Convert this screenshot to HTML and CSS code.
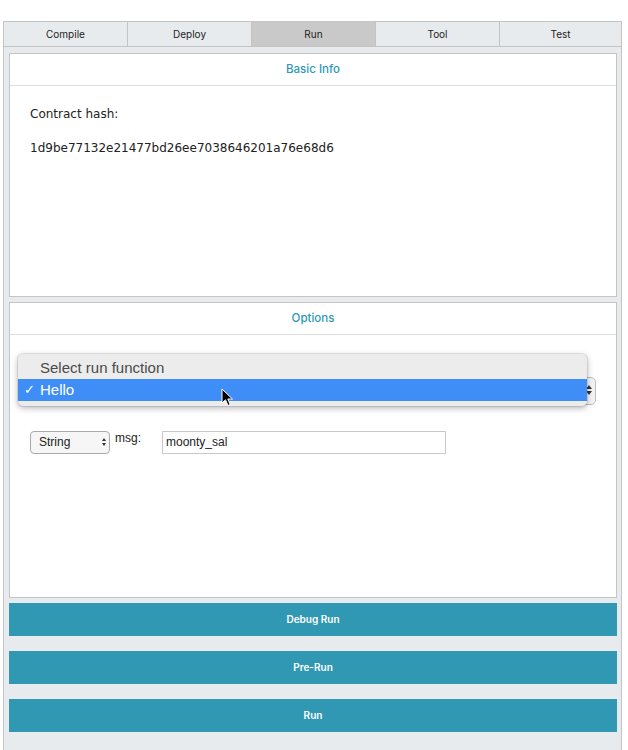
FILE: index.html
```html
<!DOCTYPE html>
<html>
<head>
<meta charset="utf-8">
<link rel="stylesheet" href="styles.css">
</head>
<body>
<div class="app">
  <div class="tabs">
    <div class="tab">Compile</div>
    <div class="tab">Deploy</div>
    <div class="tab active">Run</div>
    <div class="tab">Tool</div>
    <div class="tab">Test</div>
  </div>
  <div class="content">
    <section class="panel info">
      <div class="panel-head">Basic Info</div>
      <div class="panel-body">
        <p class="label">Contract hash:</p>
        <p class="hash">1d9be77132e21477bd26ee7038646201a76e68d6</p>
      </div>
    </section>
    <section class="panel options">
      <div class="panel-head">Options</div>
      <div class="panel-body opts">
        <div class="func-row">
          <div class="func-select"><span class="arrows"><i class="up"></i><i class="down"></i></span></div>
          <div class="menu">
            <div class="menu-item">Select run function</div>
            <div class="menu-item sel"><span class="check">✓</span>Hello</div>
          </div>
          <svg class="cursor" width="14" height="20" viewBox="0 0 14 20"><path d="M1 1 L1 15 L4.5 11.8 L7 17.5 L9.2 16.5 L6.8 11 L11.5 11 Z" fill="#000" stroke="#fff" stroke-width="1"/></svg>
        </div>
        <div class="param">
          <div class="type-select">String<span class="arrows small"><i class="up"></i><i class="down"></i></span></div>
          <span class="msg">msg:</span>
          <div class="input">moonty_sal</div>
        </div>
      </div>
    </section>
    <div class="btn">Debug Run</div>
    <div class="btn">Pre-Run</div>
    <div class="btn">Run</div>
  </div>
</div>
</body>
</html>
```
FILE: styles.css
```css
html, body { margin: 0; padding: 0; background: #fff; }
body { font-family: "Liberation Sans", Arial, sans-serif; }
.app {
  margin: 21px 0 0 3px;
  width: 617px;
  height: 740px;
  border: 1px solid #c4c4c4;
  border-bottom: none;
  background: #e8ebee;
}
.tabs { display: flex; height: 24px; border-bottom: 1px solid #c4c4c4; }
.tab {
  flex: 0 0 123px;
  border-left: 1px solid #c4c4c4;
  display: flex; align-items: center; justify-content: center;
  font-family: "Inter", "Liberation Sans", sans-serif;
  font-size: 10px; color: #222;
}
.tab:first-child { border-left: none; }
.tab:last-child { flex: 1; }
.tab.active { background: #c9c9c9; }
.content { padding: 6px 4px 0 5px; display: flex; flex-direction: column; }
.panel { background: #fff; border: 1px solid #c4c4c4; }
.panel-head {
  height: 30px; border-bottom: 1px solid #dedede;
  display: flex; align-items: center; justify-content: center;
  font-family: "Inter", "Liberation Sans", sans-serif;
  font-size: 11.5px; font-weight: 500; color: #2e97b5;
  padding-bottom: 1px;
}
.info { height: 242px; }
.info .panel-body { padding: 20px 20px; font-family: "DejaVu Sans", sans-serif; font-size: 12px; color: #222; }
.info p { margin: 0; }
.info .label { margin-top: 1px; }
.info .hash { margin-top: 20px; }
.options { height: 294px; margin-top: 5px; }
.opts { position: relative; padding: 0; }
.func-row { position: relative; height: 96px; }
.func-select {
  position: absolute; left: 8px; top: 42px; width: 576px; height: 26px;
  border: 1px solid #bdbdbd; border-radius: 5px; background: #f4f4f4;
}
.arrows { position: absolute; right: 3px; top: 7px; display: flex; flex-direction: column; gap: 2px; }
.arrows i { display: block; width: 0; height: 0; border-left: 3px solid transparent; border-right: 3px solid transparent; }
.arrows .up { border-bottom: 4px solid #333; }
.arrows .down { border-top: 4px solid #333; }
.menu {
  position: absolute; left: 8px; top: 19px; width: 569px; height: 52px;
  background: #ececec; border-radius: 5px;
  box-shadow: 0 2px 6px rgba(0,0,0,0.3), 0 0 0 1px rgba(0,0,0,0.08);
  padding-top: 3px; box-sizing: border-box;
  font-family: "Liberation Sans", Arial, sans-serif; font-size: 15px;
}
.menu-item { height: 22px; line-height: 22px; padding-left: 22px; color: #4b4b4b; position: relative; }
.menu-item.sel { background: #3f8ef8; color: #fff; }
.check { position: absolute; left: 6px; top: 0; font-size: 13px; }
.cursor { position: absolute; left: 211px; top: 53px; }
.param { display: flex; align-items: flex-start; padding-left: 20px; margin-top: 0px; }
.type-select {
  position: relative; width: 70px; height: 21px; border: 1px solid #aaa; border-radius: 4px;
  background: #f6f6f6; font-size: 12px; line-height: 21px; padding-left: 8px; color: #222;
}
.arrows.small { top: 6px; right: 3px; }
.arrows.small i { border-left-width: 2.5px; border-right-width: 2.5px; }
.arrows.small .up { border-bottom-width: 3.5px; }
.arrows.small .down { border-top-width: 3.5px; }
.msg { font-size: 12px; color: #222; margin-left: 5px; margin-top: 0; width: 47px; }
.input {
  width: 279px; height: 21px; border: 1px solid #c8c8c8; background: #fff;
  font-size: 12px; line-height: 21px; padding-left: 3px; color: #222;
}
.btn {
  height: 33px; background: #3198b4; color: #fff;
  display: flex; align-items: center; justify-content: center;
  font-family: "Inter", "Liberation Sans", sans-serif; font-size: 10px; font-weight: 600;
  margin-top: 15px; padding-bottom: 1px; box-sizing: border-box;
}
.options + .btn { margin-top: 5px; }
```
